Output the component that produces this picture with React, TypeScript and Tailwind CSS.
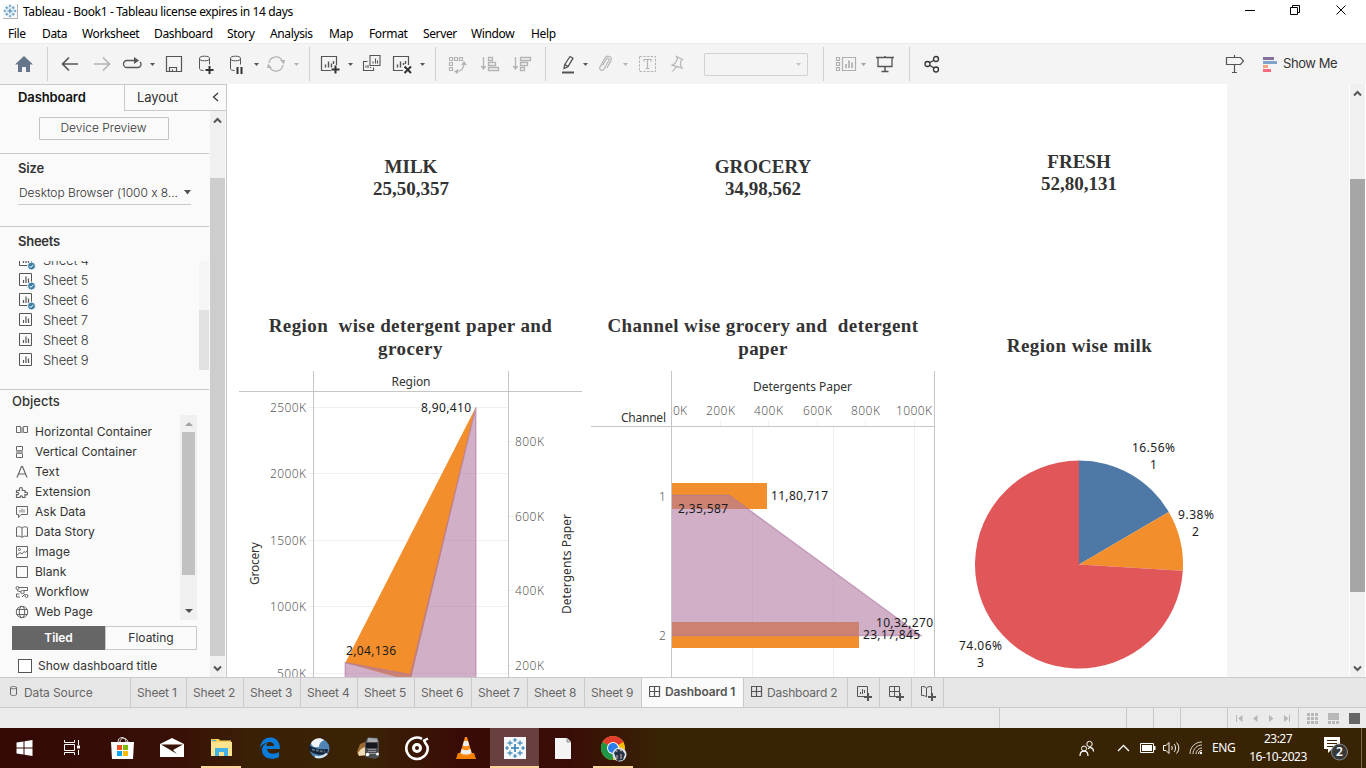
import React from "react";

type IconProps = { children: React.ReactNode; className?: string; w?: number; h?: number };

function Icon({ children, className = "", w = 20, h = 20 }: IconProps) {
  return (
    <svg width={w} height={h} viewBox={`0 0 ${w} ${h}`} fill="none" stroke="currentColor" className={`shrink-0 ${className}`}>
      {children}
    </svg>
  );
}

function Caret({ className = "" }: { className?: string }) {
  return (
    <Icon w={7} h={5} className={className}>
      <path d="M1 1h5L3.5 4z" fill="currentColor" stroke="none" />
    </Icon>
  );
}

function Sep({ className = "" }: { className?: string }) {
  return <div className={`h-[34px] w-px shrink-0 bg-[#cfcfcf] ${className}`} />;
}

function TableauMark({ size, className = "" }: { size: number; className?: string }) {
  return (
    <svg width={size} height={size} viewBox="0 0 22 22" fill="none" stroke="#2f7fb0" className={`shrink-0 ${className}`}>
      <path d="M7 11h8M11 7v8" strokeWidth="1.6" />
      <path d="M9 3h4M11 1v4M9 19h4M11 17v4M1 11h4M3 9v4M17 11h4M19 9v4" strokeWidth="1.1" />
      <path d="M3.5 6h5M6 3.500v5M13.500 6h5M16 3.500v5M3.500 16h5M6 13.500v5M13.500 16h5M16 13.500v5" strokeWidth="1.300" opacity=".85" />
    </svg>
  );
}

function TitleBar() {
  return (
    <header className="flex h-6 items-start bg-white">
      <div className="ml-[3px] mt-1 flex size-[15px] items-center justify-center border-b border-r border-[#b5b5b5] bg-[#f7fafc]">
        <TableauMark size={14} />
      </div>
      <div className="ml-[5px] mt-[3px] whitespace-pre text-[12px] leading-[18px] tracking-[-0.36px] text-black">
        Tableau - Book1 - Tableau license expires in 14 days
      </div>
      <div className="ml-auto mr-[19px] mt-[5px] flex items-start text-black">
        <Icon w={11} h={11}><path d="M0 5.500h10" /></Icon>
        <Icon w={11} h={11} className="ml-[34px]"><path d="M.5 2.500h7v7h-7zM2.500 2.500v-2h7v7h-2" /></Icon>
        <Icon w={11} h={11} className="ml-[35px]"><path d="M.5.500l9 9M9.500.500l-9 9" /></Icon>
      </div>
    </header>
  );
}

const menus: [string, string][] = [
  ["File", "w-[34px]"], ["Data", "w-[40px]"], ["Worksheet", "w-[72px]"], ["Dashboard", "w-[73px]"],
  ["Story", "w-[43px]"], ["Analysis", "w-[59px]"], ["Map", "w-[40px]"], ["Format", "w-[54px]"],
  ["Server", "w-[48px]"], ["Window", "w-[60px]"], ["Help", "w-[40px]"],
];

function MenuBar() {
  return (
    <nav className="flex h-[19px] bg-white pl-2 text-[12px] leading-[19px] tracking-[-0.37px] text-black">
      {menus.map(([name, width]) => (
        <span key={name} className={width}>{name}</span>
      ))}
    </nav>
  );
}

function Toolbar() {
  return (
    <div className="flex h-[41px] items-center border-t border-[#ececec] bg-[#f4f4f4] text-[#555]">
      <Icon className="ml-[14px]"><path d="M10 2l9 8.500h-3V18h-4v-5H8v5H4v-7.500H1z" fill="#66768a" stroke="none" /></Icon>
      <Sep className="ml-[13px]" />
      <Icon className="ml-3"><path d="M18 10H2.500M9 3.500L2.500 10 9 16.500" strokeWidth="1.700" /></Icon>
      <Icon className="ml-3 text-[#b4b4b4]"><path d="M2 10h15.500M11 3.500l6.500 6.500-6.500 6.500" strokeWidth="1.700" /></Icon>
      <Icon className="ml-[10px]"><path d="M15 6.500H5a3.500 3.500 0 000 7h10.500a3.200 3.200 0 002.500-5.500" strokeWidth="1.300" /><path d="M12 3l5 3.500-5 3.500z" fill="currentColor" stroke="none" /></Icon>
      <Caret className="ml-[7px]" />
      <Icon className="ml-2"><path d="M2.500 2.500h15v15h-15zM5.500 17.500v-4h7v4M8.500 17.500v-2" strokeWidth="1.200" /></Icon>
      <Icon className="ml-3"><ellipse cx="8.500" cy="4.500" rx="5" ry="2.300" /><path d="M3.500 4.500v10c0 1.200 1.500 2 4 2M13.500 4.500v6" /><path d="M13.500 12v8M9.500 16h8" stroke="#333" strokeWidth="2" /></Icon>
      <Icon className="ml-[11px]"><ellipse cx="8.500" cy="4.500" rx="5" ry="2.300" /><path d="M3.500 4.500v10c0 1.200 1.500 2 4 2M13.500 4.500v6" /><path d="M10.500 13v7M14.500 13v7" stroke="#333" strokeWidth="2" /></Icon>
      <Caret className="ml-[6px]" />
      <Icon className="ml-[6px] text-[#b4b4b4]"><path d="M3 9a7 7 0 0113-2.500M17 11a7 7 0 01-13 2.500" strokeWidth="1.300" /><path d="M19 6h-5l4 4.500zM1 14h5l-4-4.500z" fill="currentColor" stroke="none" /></Icon>
      <Caret className="ml-[7px] text-[#b4b4b4]" />
      <Sep className="ml-[9px]" />
      <Icon className="ml-[10px]"><path d="M11 16.500H1.500v-14h15V11" strokeWidth="1.200" /><path d="M5.500 13.500v-3M8.500 13.500v-6M11.500 13.500v-4M13.500 10V7" strokeWidth="1.400" /><path d="M15.500 11.500v8M11.500 15.500h8" stroke="#333" strokeWidth="2" /></Icon>
      <Caret className="ml-[7px]" />
      <Icon className="ml-2"><path d="M8 1.500h10v10H8zM5.500 7.500h-4v9h10v-3M11 9.500v-2M13.500 9.500v-5M15.500 9.500v-3M4 13.500v-2M6 14v-3M8.500 14v-1" strokeWidth="1.100" /></Icon>
      <Icon className="ml-[10px]"><path d="M11 16.500H1.500v-14h15V11" strokeWidth="1.200" /><path d="M5.500 13.500v-3M8.500 13.500v-6M11.500 11v-2M13.500 10V7" strokeWidth="1.400" /><path d="M12.500 12.500l6.500 6.500M19 12.500L12.500 19" stroke="#333" strokeWidth="2" /></Icon>
      <Caret className="ml-[7px]" />
      <Sep className="ml-[9px]" />
      <Icon className="ml-[11px] text-[#b4b4b4]"><path d="M2.500 3.500h3v3h-3zM7.500 3.500h3v3h-3zM12.500 3.500h3v3h-3zM2.500 8.500h3v3h-3zM2.500 13.500h3v3h-3zM17 9.500c0 5-2.500 7.500-7.500 8" strokeWidth="1.200" /><path d="M14 11l3-4 3 4zM11 15l-4 2.500 4 2.500z" fill="currentColor" stroke="none" /></Icon>
      <Icon className="ml-[13px] text-[#b4b4b4]"><path d="M3.500 3v12M8.500 3.500h4v3h-4zM8.500 8.500h7v3h-7zM8.500 13.500h10v3h-10z" strokeWidth="1.300" /><path d="M.5 12h6l-3 4z" fill="currentColor" stroke="none" /></Icon>
      <Icon className="ml-3 text-[#b4b4b4]"><path d="M3.500 3v12M8.500 3.500h10v3h-10zM8.500 8.500h7v3h-7zM8.500 13.500h4v3h-4z" strokeWidth="1.300" /><path d="M.5 12h6l-3 4z" fill="currentColor" stroke="none" /></Icon>
      <Sep className="ml-[13px]" />
      <Icon className="ml-[13px]"><path d="M3 18.500h12" strokeWidth="2" /><path d="M5 14.500l.8-4L11 2.500l3 1.700-5 8.500zM6 10.500l3 2" strokeWidth="1.300" /></Icon>
      <Caret className="ml-[3px]" />
      <Icon className="ml-[7px] text-[#b4b4b4]"><path d="M6.500 11.500l4-6.500c1-1.500 3.300-.3 2.500 1.300l-5 8.700c-1.600 2.700-5.500.8-4-2L9 4c2-3.500 7.500-1.500 6 2.500l-4 7.500" strokeWidth="1.200" /></Icon>
      <Caret className="ml-[6px] text-[#b4b4b4]" />
      <Icon className="ml-[9px] text-[#b4b4b4]"><path d="M1.500 2.500h16v15h-16z" strokeDasharray="2.500 1.200" /><path d="M6 7.500V5.500h7v2M9.500 5.500v9M7.500 14.500h4" strokeWidth="1.200" /></Icon>
      <Icon className="ml-[10px] text-[#b4b4b4]"><path d="M8.500 2.500l6 3-1.500 1-.5 4.500 1.500 3L4 11l3-1.500L9.500 5zM8.500 12.500L4.500 17.500" strokeWidth="1.200" /></Icon>
      <div className="ml-4 flex h-[23px] w-[104px] items-center justify-end rounded-[1px] border border-[#d2d2d2] pr-[5px]"><Caret className="text-[#c4c4c4]" /></div>
      <Sep className="ml-[15px]" />
      <Icon w={22} className="ml-[11px] text-[#b0b0b0]"><path d="M1.500 3.500h3v3h-3zM1.500 8.500h3v3h-3zM1.500 13.500h3v3h-3zM7.500 3.500h13v13h-13z" strokeWidth="1.200" /><path d="M11 14v-4M14 14V6.500M17 14V8.500" strokeWidth="1.700" /></Icon>
      <Caret className="ml-[3px] text-[#a0a0a0]" />
      <Icon className="ml-2"><path d="M1 3.500h18M10 2v1M10 13v4.500M6.500 17.500h7" strokeWidth="1.500" /><path d="M3 3.500v9h14v-9" strokeWidth="1.300" /></Icon>
      <Sep className="ml-[14px]" />
      <Icon className="ml-3 text-[#333]"><circle cx="5.500" cy="10" r="2.500" strokeWidth="1.300" /><circle cx="14" cy="5" r="2.500" strokeWidth="1.300" /><circle cx="14" cy="15.500" r="2.500" strokeWidth="1.300" /><path d="M8 8.500l4-2.200M8 11.500l4 2.500" strokeWidth="1.300" /></Icon>
      <Icon className="ml-auto"><path d="M1.500 3.500h14l3 3.500-3 3.500h-14zM9.500 1v2M9.500 10.500v8M7 18.500h5" strokeWidth="1.200" /></Icon>
      <svg width="15" height="15" viewBox="0 0 15 15" className="ml-[18px] shrink-0">
        <path d="M0 0h11v3H0z" fill="#85709c" /><path d="M0 4h14v3H0z" fill="#7ea3cd" /><path d="M0 8h5v3H0z" fill="#f5a77b" /><path d="M0 12h8v3H0z" fill="#fb6a7c" />
      </svg>
      <span className="ml-[5px] mr-[17px] w-[66px] whitespace-nowrap font-['Inter'] text-[13px] tracking-[-0.42px] text-[#333]">Show Me</span>
    </div>
  );
}

function Arrow({ up }: { up?: boolean }) {
  return (
    <Icon w={9} h={7} className="text-[#555]">
      <path d={up ? "M1 5.500L4.500 2 8 5.500" : "M1 1.500L4.500 5 8 1.500"} strokeWidth="2" />
    </Icon>
  );
}

function SheetIcon({ used }: { used?: boolean }) {
  return (
    <Icon w={17} h={18} className="overflow-visible text-[#555]">
      <path d="M1.500 1.500h12v12h-12z" />
      <path d="M5.500 11V8M8 11V4.500M10.500 11V6.500" strokeWidth="1.200" />
      {used && <><circle cx="13.500" cy="14" r="4" fill="#3a7fa3" stroke="#fafafa" /><path d="M11.700 14l1.300 1.400 2.300-2.600" stroke="#fff" /></>}
    </Icon>
  );
}

const sheets: [string, boolean][] = [
  ["Sheet 4", true], ["Sheet 5", true], ["Sheet 6", true], ["Sheet 7", false], ["Sheet 8", false], ["Sheet 9", false],
];

const objects: [string, React.ReactNode][] = [
  ["Horizontal Container", <><path d="M1.500 1.500h4v6h-4zM8.500 1.500h4v6h-4z" /><path d="M5.500 2h3v6h-3z" fill="#aaa" stroke="none" /></>],
  ["Vertical Container", <><path d="M1.500 1.500h6v4h-6zM1.500 8.500h6v4h-6z" /><path d="M1 5.500h7v3H1z" fill="#aaa" stroke="none" /></>],
  ["Text", <path d="M2 12.500L6.500 1.500h1L12 12.500M3.500 9h7" strokeWidth="1.200" />],
  ["Extension", <path d="M1.500 12.500V9.500c3 1 3-3 0-2V5.500H4.500c-1.200-4 4-4 2.800 0H10v2c3.500-1 3.500 3.200 0 2.200v2.800H7.500c.5-2.200-3-2.200-2.500 0z" strokeWidth="1.200" />],
  ["Ask Data", <><path d="M1.500 1.500h11v8H6l-2.500 3v-3h-2z" /><path d="M5 7.500V5M7 7.500V3.500M9 7.500V4.500" stroke="#aaa" strokeWidth="1.600" /></>],
  ["Data Story", <path d="M7 3C5.500 1.500 3 1.500 1.500 2.500v9C3.500 10.800 5.500 11 7 12.500 8.500 11 10.500 10.800 12.500 11.500v-9C11 1.500 8.500 1.500 7 3zM7 3v9" />],
  ["Image", <><path d="M1.500 1.500h11v11h-11zM2 10l3-2.500 2 1.500 2-2.500 1.500 1 2-2" /><circle cx="4.500" cy="4.500" r="1" /></>],
  ["Blank", <path d="M1.500 1.500h11v11h-11z" />],
  ["Workflow", <><path d="M4 2.500h8.500v3H9M2 5.500l4 1.500M4.500 9h-3v3H5M7 12l3-3" /><circle cx="2.500" cy="3" r="1.500" /><circle cx="7.500" cy="7" r="1.700" /><circle cx="11.500" cy="11" r="1.500" /></>],
  ["Web Page", <><circle cx="7" cy="7" r="5.700" /><ellipse cx="7" cy="7" rx="2.700" ry="5.700" /><path d="M1.500 4.500h11M1.500 9.500h11" /></>],
];

function Sidebar() {
  return (
    <aside className="flex h-[593px] w-[227px] shrink-0 flex-col border-r border-t border-[#c9c9c9] bg-[#fafafa] font-['Inter'] text-[12px] text-[#444]">
      <div className="flex h-[26px] shrink-0 text-[13px]">
        <div className="w-[124px] pl-[18px] font-semibold leading-[25px] tracking-[-0.1px] text-[#111]">Dashboard</div>
        <div className="flex flex-1 items-center border-b border-l border-[#c9c9c9] pl-3 text-[#333]">
          <span className="tracking-[-0.05px]">Layout</span>
          <Icon w={7} h={10} className="ml-auto mr-[7px] mb-px"><path d="M6 1L1.500 5 6 9" strokeWidth="1.200" /></Icon>
        </div>
      </div>
      <div className="flex min-h-0 flex-1">
        <div className="flex w-[209px] flex-col">
          <div className="flex h-[43px] shrink-0 border-b border-[#c9c9c9] pl-[39px] pt-[6px]">
            <div className="h-[23px] w-[130px] rounded-[1px] border border-[#c4c4c4] pr-px text-center font-light leading-[20px] text-[#333]">Device Preview</div>
          </div>
          <section className="h-[73px] shrink-0 border-b border-[#c9c9c9] pl-[18px] pt-1">
            <h2 className="h-5 text-[13px] font-semibold leading-[20px] tracking-[-0.15px] text-[#333]">Size</h2>
            <div className="mt-1 flex h-[23px] w-[173px] items-center border-b border-[#c9c9c9] pb-px pl-px">
              <span className="whitespace-nowrap font-light tracking-[-0.05px] text-[#333]">Desktop Browser (1000 x 8...</span>
              <Icon w={7} h={5} className="ml-auto"><path d="M0 0h7L3.500 4.500z" fill="#555" stroke="none" /></Icon>
            </div>
          </section>
          <section className="flex h-[163px] shrink-0 flex-col border-b border-[#c9c9c9]">
            <h2 className="h-[34px] pl-[18px] pt-1 text-[13px] font-semibold leading-[20px] tracking-[-0.25px] text-[#333]">Sheets</h2>
            <div className="flex h-[109px]">
              <div className="flex w-[199px] flex-col overflow-hidden pl-[18px]">
                <div className="-mt-[10px] flex flex-col">
                  {sheets.map(([name, used]) => (
                    <div key={name} className="flex h-5 items-center">
                      <SheetIcon used={used} />
                      <span className="ml-2 text-[13px] font-light tracking-[-0.1px] text-[#333]">{name}</span>
                    </div>
                  ))}
                </div>
              </div>
              <div className="flex w-[10px] flex-col justify-end bg-[#f5f5f5]"><div className="h-[60px] bg-[#e1e1e1]" /></div>
            </div>
          </section>
          <section className="flex flex-1 flex-col pl-3 text-[#333]">
            <h2 className="h-[25px] text-[13px] font-medium leading-[23px]">Objects</h2>
            <div className="flex h-[205px] overflow-hidden">
              <div className="w-[168px] pt-[7px]">
                {objects.map(([name, art]) => (
                  <div key={name} className="flex h-5 items-center pl-[3px]">
                    <Icon w={14} h={14} className="text-[#666]">{art}</Icon>
                    <span className="ml-[6px] whitespace-nowrap tracking-[0.02px]">{name}</span>
                  </div>
                ))}
              </div>
              <div className="flex w-[17px] flex-col items-center bg-[#f0f0f0]">
                <Icon w={8} h={17}><path d="M0 11h8L4 7z" fill="#a3a3a3" stroke="none" /></Icon>
                <div className="h-[143px] w-[13px] bg-[#c1c1c1]" />
                <Icon w={8} h={17} className="mt-auto mb-[2px]"><path d="M0 8h8l-4 4z" fill="#505050" stroke="none" /></Icon>
              </div>
            </div>
            <div className="mt-[6px] flex h-6 w-[185px] text-center leading-[22px]">
              <div className="w-[93px] bg-[#666] font-semibold leading-6 tracking-[-0.1px] text-white">Tiled</div>
              <div className="flex-1 border border-[#c9c9c9]">Floating</div>
            </div>
            <div className="mt-[9px] flex h-[14px] items-center pl-[6px]">
              <div className="size-[14px] border border-[#555] bg-white" />
              <span className="ml-[6px] whitespace-nowrap tracking-[-0.02px]">Show dashboard title</span>
            </div>
          </section>
        </div>
        <div className="ml-px flex w-[15px] flex-col items-center bg-[#f0f0f0]">
          <div className="flex h-[67px] pt-[6px]"><Arrow up /></div>
          <div className="h-[478px] w-full bg-[#cdcdcd]" />
          <div className="mt-[9px] flex"><Arrow /></div>
        </div>
      </div>
    </aside>
  );
}

type LabelProps = { x: number; y: number; w: number; children: string; fill?: string; size?: number; weight?: number; vertical?: boolean };

function Label({ x, y, w, children, fill = "#1c1c1c", size = 12, weight = 400, vertical }: LabelProps) {
  return (
    <text x={x} y={y} textLength={w} fill={fill} fontSize={size} fontWeight={weight} transform={vertical ? `rotate(-90 ${x} ${y})` : undefined}>
      {children}
    </text>
  );
}

function Tick({ x, y, w, children }: { x: number; y: number; w: number; children: string }) {
  return <Label x={x} y={y} w={w} fill="#5c5c5c" weight={300}>{children}</Label>;
}

function RegionChart() {
  return (
    <svg width="343" height="306" viewBox="239 371 343 306" className="font-['Noto_Sans']">
      <path d="M308 407.500h200M308 473.500h200M308 540.500h200M308 606.500h200M308 673.500h200M509 441.500h4M509 516.500h4M509 590.500h4M509 665.500h4" stroke="#efefef" />
      <path d="M313.500 371v306M508.500 371v306M239 391.500h343" stroke="#c6c6c6" />
      <path d="M345.300 662.700L475.700 407.500 410.500 681z" fill="#f28e2b" />
      <path d="M345.300 662.700l65.200 12 65.300-267.200V680H345.300z" fill="#b07aa1" fillOpacity=".6" />
      <path d="M345.300 680v-17.300l65.200 12 65.300-267.200V680" fill="none" stroke="#b07aa1" strokeOpacity=".6" strokeWidth="1.500" />
      <Label x={391.500} y={386} w={39} fill="#333" size={12}>Region</Label>
      <Tick x={270} y={412} w={36}>2500K</Tick>
      <Tick x={270} y={478} w={36}>2000K</Tick>
      <Tick x={270} y={545} w={36}>1500K</Tick>
      <Tick x={270} y={611} w={36}>1000K</Tick>
      <Tick x={277} y={678} w={29}>500K</Tick>
      <Tick x={515} y={446} w={29}>800K</Tick>
      <Tick x={515} y={521} w={29}>600K</Tick>
      <Tick x={515} y={595} w={29}>400K</Tick>
      <Tick x={515} y={670} w={29}>200K</Tick>
      <Label x={421} y={412} w={50}>8,90,410</Label>
      <Label x={346} y={655} w={50}>2,04,136</Label>
      <Label x={259} y={585} w={43} fill="#333" size={12} vertical>Grocery</Label>
      <Label x={571} y={614} w={100} fill="#333" size={12} vertical>Detergents Paper</Label>
    </svg>
  );
}

function ChannelChart() {
  return (
    <svg width="344" height="306" viewBox="591 371 344 306" className="font-['Noto_Sans']">
      <path d="M752.500 427v250M833.500 427v250M914.500 421v256M720.500 421v5M768.500 421v5M817.500 421v5M865.500 421v5" stroke="#efefef" />
      <path d="M671.500 371v306M934.500 371v306M591 426.500h343" stroke="#c6c6c6" />
      <path d="M672 483h95v26h-95zM672 622h187v26H672z" fill="#f28e2b" />
      <path d="M672 495h57l192 140.500H672z" fill="#b07aa1" fillOpacity=".6" />
      <path d="M672 495.300h57L921 635.500H672" fill="none" stroke="#b07aa1" strokeOpacity=".6" strokeWidth="1.300" />
      <Label x={753} y={391} w={99} fill="#333" size={12}>Detergents Paper</Label>
      <Label x={621} y={422} w={45} fill="#333" size={12}>Channel</Label>
      <Tick x={673} y={415} w={14}>0K</Tick>
      <Tick x={706} y={415} w={29}>200K</Tick>
      <Tick x={754} y={415} w={29}>400K</Tick>
      <Tick x={803} y={415} w={29}>600K</Tick>
      <Tick x={851} y={415} w={29}>800K</Tick>
      <Tick x={896} y={415} w={36}>1000K</Tick>
      <Tick x={659} y={501} w={7}>1</Tick>
      <Tick x={659} y={640} w={7}>2</Tick>
      <Label x={771} y={500} w={57}>11,80,717</Label>
      <Label x={678} y={513} w={50}>2,35,587</Label>
      <Label x={876} y={627} w={57}>10,32,270</Label>
      <Label x={863} y={639} w={57}>23,17,845</Label>
    </svg>
  );
}

function pieSlice(from: number, to: number) {
  const at = (f: number) => `${1079 + 104 * Math.sin(f * 2 * Math.PI)} ${564.5 - 104 * Math.cos(f * 2 * Math.PI)}`;
  return `M1079 564.5L${at(from)}A104 104 0 ${to - from > 0.5 ? 1 : 0} 1 ${at(to)}Z`;
}

function MilkPie() {
  return (
    <svg width="272" height="306" viewBox="943 371 272 306" className="font-['Noto_Sans']">
      <path d={pieSlice(0, 0.1656)} fill="#4e79a7" />
      <path d={pieSlice(0.1656, 0.2594)} fill="#f28e2b" />
      <path d={pieSlice(0.2594, 1)} fill="#e15759" />
      <Label x={1132} y={452} w={43}>16.56%</Label>
      <Label x={1150} y={469} w={7}>1</Label>
      <Label x={1178} y={519} w={36}>9.38%</Label>
      <Label x={1192} y={536} w={7}>2</Label>
      <Label x={959} y={650} w={43}>74.06%</Label>
      <Label x={977} y={667} w={7}>3</Label>
    </svg>
  );
}

function Dashboard() {
  return (
    <main className="grid h-[593px] w-[1000px] shrink-0 grid-cols-[343px_344px_272px] grid-rows-[216px_71px_306px] gap-x-[9px] overflow-hidden bg-white pl-3">
      <div className="pl-px pt-[72px] text-center font-['Liberation_Serif'] text-[19px] font-bold leading-[22px] text-[#333]">
        <div>MILK</div><div>25,50,357</div>
      </div>
      <div className="pt-[72px] text-center font-['Liberation_Serif'] text-[19px] font-bold leading-[22px] text-[#333]">
        <div>GROCERY</div><div>34,98,562</div>
      </div>
      <div className="-ml-[2px] pt-[67px] text-center font-['Liberation_Serif'] text-[19px] font-bold leading-[22px] text-[#333]">
        <div>FRESH</div><div>52,80,131</div>
      </div>
      <h1 className="whitespace-pre pt-[14px] text-center font-['Liberation_Serif'] text-[19px] font-bold leading-[23px] tracking-[0.41px] text-[#333]">{"Region  wise detergent paper and\ngrocery"}</h1>
      <h1 className="whitespace-pre pt-[14px] text-center font-['Liberation_Serif'] text-[19px] font-bold leading-[23px] tracking-[0.41px] text-[#333]">{"Channel wise grocery and  detergent\npaper"}</h1>
      <h1 className="-ml-px pt-[34px] text-center font-['Liberation_Serif'] text-[19px] font-bold leading-[23px] tracking-[0.44px] text-[#333]">Region wise milk</h1>
      <RegionChart />
      <ChannelChart />
      <div className="-ml-px"><MilkPie /></div>
    </main>
  );
}

const sheetTabs: [string, string][] = [
  ["Sheet 1", "w-[56px]"], ["Sheet 2", "w-[57px]"], ["Sheet 3", "w-[57px]"], ["Sheet 4", "w-[57px]"], ["Sheet 5", "w-[57px]"],
  ["Sheet 6", "w-[57px]"], ["Sheet 7", "w-[56px]"], ["Sheet 8", "w-[57px]"], ["Sheet 9", "w-[57px]"],
];

function GridIcon() {
  return <Icon w={12} h={12} className="text-[#555]"><path d="M.5.500h10v10H.500zM5.500.500v10M.500 5.500h10" strokeWidth="1.200" /></Icon>;
}

function SheetTabs() {
  return (
    <div className="flex h-[31px] border-y border-[#c9c9c9] bg-[#e6e6e6] font-['Inter'] text-[12px] leading-[29px] text-[#666]">
      <div className="flex w-[131px] items-center border-r border-[#c9c9c9] pl-[9px]">
        <Icon w={10} h={12} className="mb-[3px]"><path d="M1.500 2.500c0-1.300 6-1.300 6 0v7c0 1.300-6 1.300-6 0zM1.500 2.800c0 1.300 6 1.300 6 0" /></Icon>
        <span className="ml-[5px] tracking-[-0.1px]">Data Source</span>
      </div>
      {sheetTabs.map(([name, width]) => (
        <div key={name} className={`whitespace-nowrap border-r border-[#c9c9c9] pl-[6px] tracking-[-0.2px] ${width}`}>{name}</div>
      ))}
      <div className="flex w-[102px] items-center whitespace-nowrap border-r border-[#c9c9c9] bg-[#fafafa] pl-[7px] pb-[2px] font-semibold text-[#555]">
        <GridIcon /><span className="ml-1 tracking-[-0.1px]">Dashboard 1</span>
      </div>
      <div className="flex w-[104px] items-center whitespace-nowrap border-r border-[#c9c9c9] pl-[7px] pb-px">
        <GridIcon /><span className="ml-1 tracking-[-0.2px]">Dashboard 2</span>
      </div>
      <div className="flex w-8 items-center justify-center border-r border-[#c9c9c9]">
        <Icon w={16} h={16} className="text-[#555]"><path d="M8 11.500H1.500v-10h10V8M4.500 9V7M6.500 9V4M8.500 8V5" /><path d="M12 8v8M8 12h8" strokeWidth="2" /></Icon>
      </div>
      <div className="flex w-8 items-center justify-center border-r border-[#c9c9c9]">
        <Icon w={16} h={16} className="text-[#555]"><path d="M8 11.500H1.500v-10h10V8M6.500 1.500v10M1.500 6.500h10" /><path d="M12 8v8M8 12h8" strokeWidth="2" /></Icon>
      </div>
      <div className="flex w-8 items-center justify-center border-r border-[#c9c9c9]">
        <Icon w={16} h={16} className="text-[#555]"><path d="M6.500 3C5 1.500 3 1.500 1.500 1.500v9c2 0 3.500 0 5 1.500M6.500 3v9M6.500 3C8 1.500 10 1.500 11.500 1.500V8" /><path d="M12 8v8M8 12h8" strokeWidth="2" /></Icon>
      </div>
    </div>
  );
}

function StatusBar() {
  return (
    <div className="flex h-5 items-stretch justify-end bg-[#ebebeb] text-[#b8b8b8]">
      <div className="w-[127px] border-l border-[#c9c9c9]" />
      <div className="w-[27px] border-l border-[#c9c9c9]" />
      <div className="w-[27px] border-l border-[#c9c9c9]" />
      <div className="w-[47px] border-l border-[#c9c9c9]" />
      <div className="flex w-[71px] items-center gap-[9px] border-l border-[#c9c9c9] pl-2">
        <Icon w={7} h={8}><path d="M.5 1v7" /><path d="M6.500 1v7L2 4.500z" fill="currentColor" stroke="none" /></Icon>
        <Icon w={7} h={8}><path d="M5.500 1v7L1 4.500z" fill="currentColor" stroke="none" /></Icon>
        <Icon w={7} h={8}><path d="M1 1v7l4.500-3.500z" fill="currentColor" stroke="none" /></Icon>
        <Icon w={7} h={8}><path d="M5.500 1v7" /><path d="M0 1v7l4.500-3.500z" fill="currentColor" stroke="none" /></Icon>
      </div>
      <div className="flex w-[68px] items-center gap-[10px] border-l border-[#c9c9c9] pl-2">
        <Icon w={11} h={11}><path d="M0 1.500h11M0 5.500h11M0 9.500h11" strokeWidth="3" strokeDasharray="3 1" /></Icon>
        <Icon w={11} h={11}><path d="M0 0h11v7H0z" fill="currentColor" stroke="none" /><path d="M0 9.500h11" strokeWidth="3" strokeDasharray="3 1" /></Icon>
        <div className="size-[11px] bg-[#666]" />
      </div>
    </div>
  );
}

const apps: { id: string; art: React.ReactNode; state?: string }[] = [
  { id: "start", art: <path d="M3.500 6.500l7-1v6h-7zM11.500 5.300l8-1.300v7.500h-8zM3.500 12.500h7v6l-7-1zM11.500 12.500h8V20l-8-1.300z" fill="#fff" /> },
  { id: "tasks", art: <g fill="none" stroke="#fff"><path d="M2.500 8.500h10v6h-10zM2.500 4v2.500h10V4M2.500 19v-2.500h10V19M16.500 4v5M16.500 14v5" /><path d="M16.500 9.500v3" strokeWidth="3" /></g> },
  { id: "store", art: <><path d="M0 6h23l-1 17H1z" fill="#fff" /><path d="M7 6c0-6 8-6 8 0M9 6c0-5 7-5 8 0" fill="none" stroke="#ddd" /><path d="M6 9h5v5H6z" fill="#f25022" /><path d="M12 9h5v5h-5z" fill="#7fba00" /><path d="M6 15h5v5H6z" fill="#00a4ef" /><path d="M12 15h5v5h-5z" fill="#ffb900" /></> },
  { id: "mail", art: <><path d="M0 8l12-6 12 6v13H0z" fill="#fff" /><path d="M1 8.500h22L13 14l4 4z" fill="#3a1507" /></> },
  { id: "files", state: "open", art: <><path d="M2 3h8l1 1.500h11V20H2z" fill="#f7cf5b" /><path d="M2 6h21v14H2z" fill="#ffe490" /><path d="M3 4h4v1H3z" fill="#3aaadc" /><path d="M6 20v-8h13v8h-4v-4h-5v4z" fill="#41b3e6" /></> },
  { id: "edge", art: <path d="M2 12C3 4 8 1 13 1.500c6 .5 9 5 9 11.500H9c.5 5 7 6 12 3v5c-8 4-17 1-17-7 0-4 3-6.500 6-7.500-1 1-1.500 2-1.500 3.500H16C16 4 6 5 2 12z" fill="#0a7ddb" /> },
  { id: "player", art: <><circle cx="12.500" cy="12.500" r="10" fill="#4f86b5" /><path d="M4 7C7 2 13 1 17 4c-4 2-5 5-5 7-4 1-7 0-8-4z" fill="#f2f7fb" /><path d="M2 9c4 3 10 5 19 4l-1 5c-7 2-15 0-18-4z" fill="#13243a" /><path d="M5 13.500l13 2.500" stroke="#5c6c78" strokeDasharray="3 1" strokeWidth="2" /><path d="M8 20.500c5 2 9 0 12-3" stroke="#dce7ef" strokeWidth="2" fill="none" /></> },
  { id: "truck", art: <><path d="M1 16l3-8 5-2v14l-7-1z" fill="#a06a33" /><path d="M2 17l3-4 4-2v8l-6 1z" fill="#f0dcb4" /><path d="M9 6l3-5 10 1 1 5v14l-4 2-10-2z" fill="#4b4d51" /><path d="M12 2l9 .5 1 3.500H11z" fill="#a9adb0" /><path d="M10 7h11l.5 5H10z" fill="#15181c" /><path d="M12 13.500h8M12 15.500h8M12 17.500h8" stroke="#90959a" /><circle cx="11.500" cy="18.500" r="1.800" fill="#fff" /><circle cx="21.500" cy="18" r="1.500" fill="#fff" /></> },
  { id: "music", art: <g fill="none" stroke="#fff"><path d="M17 2.800A10.700 10.700 0 1022.700 12C22.700 9 20 8 19.500 5" strokeWidth="2.600" /><circle cx="12" cy="12" r="3.500" strokeWidth="3" /><path d="M18 5l5-2.500" strokeWidth="2.500" /></g> },
  { id: "vlc", art: <><path d="M4 17h16l2 6H2z" fill="#f48000" /><path d="M11 1h2l5 17c-3 2.500-9 2.500-12 0z" fill="#f78b16" /><path d="M10 5l-1.300 4.500c2 1 4.600 1 6.600 0L14 5zM7.500 13l-1 4c3 2 8 2 11 0l-1-4c-3 1.500-6 1.500-9 0z" fill="#eee" /></> },
  { id: "tableau", state: "active", art: <><path d="M1 1h22v22H1z" fill="#f5f9fb" /><g transform="translate(1 1)"><TableauMark size={22} /></g></> },
  { id: "document", art: <><path d="M3 2h12l4 4v17H3z" fill="#f4f4f4" /><path d="M15 2v4h4" fill="#ccc" stroke="#777" strokeWidth=".7" /></> },
  { id: "chrome", state: "running", art: <><circle cx="12" cy="12" r="12" fill="#fbbc05" /><path d="M12 12L1.600 6A12 12 0 0122.400 6z" fill="#e33b2e" /><path d="M12 12L1.600 6A12 12 0 0012 24z" fill="#1e9648" /><circle cx="12" cy="12" r="6" fill="#fff" /><circle cx="12" cy="12" r="5" fill="#2b7de9" /><circle cx="18.500" cy="18.500" r="7" fill="#dfe5ea" /><path d="M13 17l3-4 5 1 3 4-2 6-6 1z" fill="#253448" /><path d="M15 15h1.500M19 14.500h2M16 19v4M20 18v5" stroke="#bd9d91" strokeWidth="1.300" /></> },
];

function Taskbar() {
  return (
    <footer className="flex h-10 items-stretch bg-[linear-gradient(90deg,#340906_0px,#381006_180px,#3a2105_250px,#3a2205_370px,#390b06_460px,#390d06_570px,#382304_660px,#382304_1366px)] font-['Noto_Sans'] text-white">
      {apps.map(({ id, art, state }) => (
        <div key={id} className={`flex w-[49px] shrink-0 flex-col items-center pt-2 ${state === "active" ? "bg-[#684040]" : ""}`}>
          <svg width="24" height="24" viewBox="0 0 24 24" className="shrink-0 overflow-visible">{art}</svg>
          {state && <div className={`mt-auto h-[2px] bg-[#fbd59a] ${state === "active" ? "w-full" : "w-10"}`} />}
        </div>
      ))}
      <div className="ml-auto flex items-center">
        <Icon w={16} h={18} className="mr-[2px]"><circle cx="10.500" cy="5" r="2.700" /><circle cx="5" cy="9.500" r="2.500" /><path d="M1 17c0-6.500 8-6.500 8 0M9 10c1.500-2.500 5.500-1.500 5.500 2.500" strokeWidth="1.200" /></Icon>
        <Icon w={13} h={8} className="ml-5"><path d="M1 7l5.500-5.500L12 7" strokeWidth="1.300" /></Icon>
        <Icon w={16} h={10} className="ml-[10px]"><path d="M.5.500h13v9H.500z" /><path d="M2 2h10v6H2zM14 3h1.500v4H14z" fill="#fff" stroke="none" /></Icon>
        <Icon w={18} h={14} className="ml-[7px]"><path d="M.5 4.500h2.500l3-3v11l-3-3H.500zM8.500 5c1 1 1 3 0 4M11 3c2 2 2 6 0 8M13.500 1.500c3 3 3 8 0 11" /></Icon>
        <Icon w={14} h={14} className="ml-2"><path d="M1 13C1 6 6 1 13 1M4 13c0-5 4-9 9-9M7 13c0-3 3-6 6-6" opacity=".8" /><path d="M9.500 13c0-2 1.500-3.500 3.500-3.500" /><circle cx="12" cy="12" r="1.200" fill="#fff" stroke="none" /></Icon>
        <span className="ml-[9px] w-6 text-[12px] tracking-[-0.4px]">ENG</span>
        <div className="ml-[12px] w-[60px] text-center text-[12px] leading-[18px]">
          <div className="tracking-[-0.5px]">23:27</div>
          <div className="whitespace-nowrap tracking-[-0.5px]">16-10-2023</div>
        </div>
        <svg width="25" height="26" viewBox="0 0 25 26" className="ml-[16px] shrink-0">
          <path d="M0 2h16v12H8l-4 4v-4H0z" fill="#fff" />
          <path d="M3 5.500h10M3 8.500h10M3 11.500h6" stroke="#382304" />
          <circle cx="15.500" cy="17" r="8" fill="#383838" stroke="#8b8b8b" />
          <text x="12" y="21.200" fontSize="12" fontWeight="600" fill="#fff">2</text>
        </svg>
        <div className="ml-3 mr-1 h-10 w-px bg-[#78684f]" />
      </div>
    </footer>
  );
}

export default function App() {
  return (
    <div className="flex h-[768px] w-[1366px] flex-col overflow-hidden bg-white font-['Noto_Sans',sans-serif]">
      <TitleBar />
      <MenuBar />
      <Toolbar />
      <div className="flex h-[593px]">
        <Sidebar />
        <Dashboard />
        <div className="w-[122px] bg-[#f4f4f4]" />
        <div className="ml-px mr-px flex w-[15px] flex-col items-center bg-[#f0f0f0]">
          <div className="flex h-[95px] pt-[6px]"><Arrow up /></div>
          <div className="h-[413px] w-full bg-[#a6a6a6]" />
          <div className="mb-[5px] mt-auto flex"><Arrow /></div>
        </div>
      </div>
      <SheetTabs />
      <StatusBar />
      <Taskbar />
    </div>
  );
}
